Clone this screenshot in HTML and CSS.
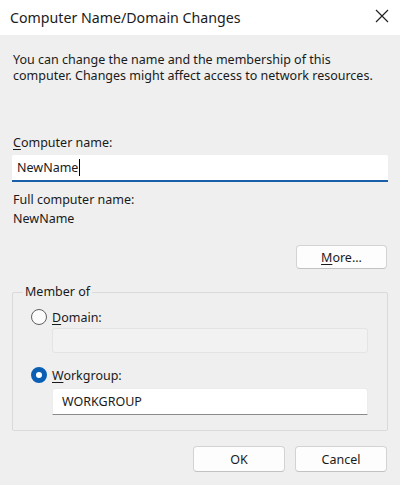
FILE: index.html
```html
<!DOCTYPE html>
<html lang="en">
<head>
<meta charset="utf-8">
<title>Computer Name/Domain Changes</title>
<link rel="stylesheet" href="styles.css">
</head>
<body>
<div class="dialog">
  <div class="titlebar">
    <span class="title">Computer Name/Domain Changes</span>
    <svg class="close" width="14" height="14" viewBox="0 0 14 14"><path d="M1 1 L13 13 M13 1 L1 13" stroke="#222" stroke-width="1.2" fill="none"/></svg>
  </div>
  <div class="content">
    <p class="desc">You can change the name and the membership of this<br>computer. Changes might affect access to network resources.</p>
    <label class="label name-label"><u>C</u>omputer name:</label>
    <div class="input active"><span>NewName</span><span class="caret"></span></div>
    <div class="label full-label">Full computer name:</div>
    <div class="label full-value">NewName</div>
    <div class="more-row"><button class="btn"><u>M</u>ore...</button></div>
    <fieldset class="group">
      <legend>Member of</legend>
      <div class="radio-row"><span class="radio"></span><span><u>D</u>omain:</span></div>
      <div class="input disabled"></div>
      <div class="radio-row wg"><span class="radio checked"></span><span><u>W</u>orkgroup:</span></div>
      <div class="input wg-input"><span>WORKGROUP</span></div>
    </fieldset>
    <div class="buttons">
      <button class="btn">OK</button>
      <button class="btn">Cancel</button>
    </div>
  </div>
</div>
</body>
</html>
```
FILE: styles.css
```css
html, body {
  margin: 0;
  padding: 0;
}
body {
  width: 400px;
  height: 485px;
  background: #efefef;
  font-family: "Noto Sans", "Open Sans", sans-serif;
  font-size: 12.5px;
  color: #1a1a1a;
  overflow: hidden;
}
.dialog {
  height: 485px;
}
.titlebar {
  height: 35px;
  background: #ffffff;
  display: flex;
  align-items: center;
  justify-content: space-between;
  padding: 0 10px 0 10px;
  box-sizing: border-box;
}
.title {
  font-size: 14.2px;
  color: #1b1b1b;
  margin-top: -1px;
}
.close {
  margin-right: 1px;
  margin-top: -4px;
}
.content {
  padding: 0 12px;
}
.desc {
  margin: 0;
  padding: 17px 0 0 1px;
  line-height: 16px;
}
.label {
  display: block;
  line-height: 16px;
  padding-left: 1px;
}
.name-label {
  margin-top: 51px;
}
u {
  text-decoration: underline;
  text-underline-offset: 2px;
}
.input {
  height: 27px;
  box-sizing: border-box;
  background: #ffffff;
  display: flex;
  align-items: center;
  padding-left: 5px;
  font-size: 12.5px;
}
.input.active {
  margin-top: 4px;
  border-bottom: 2px solid #1a5fa8;
  border-radius: 2px 2px 0 0;
}
.caret {
  display: inline-block;
  width: 1px;
  height: 17px;
  background: #000;
  margin-left: 1px;
}
.full-label {
  margin-top: 10px;
}
.full-value {
  margin-top: 3px;
}
.more-row {
  display: flex;
  justify-content: flex-end;
  margin-top: 18px;
  padding-right: 1px;
}
.btn {
  width: 91px;
  height: 24px;
  background: #fdfdfd;
  border: 1px solid #d3d3d3;
  border-bottom-color: #c2c2c2;
  border-radius: 4px;
  font-family: inherit;
  font-size: 12.5px;
  color: #1a1a1a;
  padding: 0;
}
.group {
  margin: 15px 0 0 0;
  padding: 9px 19px 15px 18px;
  border: 1px solid #dadada;
  border-radius: 2px;
}
.group legend {
  padding: 0 2px;
  margin-left: -8px;
  line-height: 16px;
}
.radio-row {
  display: flex;
  align-items: center;
  gap: 5px;
  height: 16px;
}
.radio {
  width: 16px;
  height: 16px;
  box-sizing: border-box;
  border: 1px solid #5f5f5f;
  border-radius: 50%;
  background: #fbfbfb;
}
.radio.checked {
  border: 5px solid #0a5fb4;
  background: #ffffff;
}
.input.disabled {
  margin: 3px 0 0 21px;
  height: 25px;
  background: #f2f2f2;
  border: 1px solid #e4e4e4;
  border-radius: 3px;
}
.radio-row.wg {
  margin-top: 14px;
}
.wg-input {
  margin: 5px 0 0 21px;
  height: 27px;
  border: 1px solid #ececec;
  border-bottom: 1px solid #8a8a8a;
  border-radius: 3px 3px 0 0;
  padding-left: 9px;
}
.buttons {
  display: flex;
  justify-content: flex-end;
  gap: 10px;
  margin-top: 15px;
  padding-right: 1px;
}
.buttons .btn {
  height: 26px;
  width: 92px;
}
```
